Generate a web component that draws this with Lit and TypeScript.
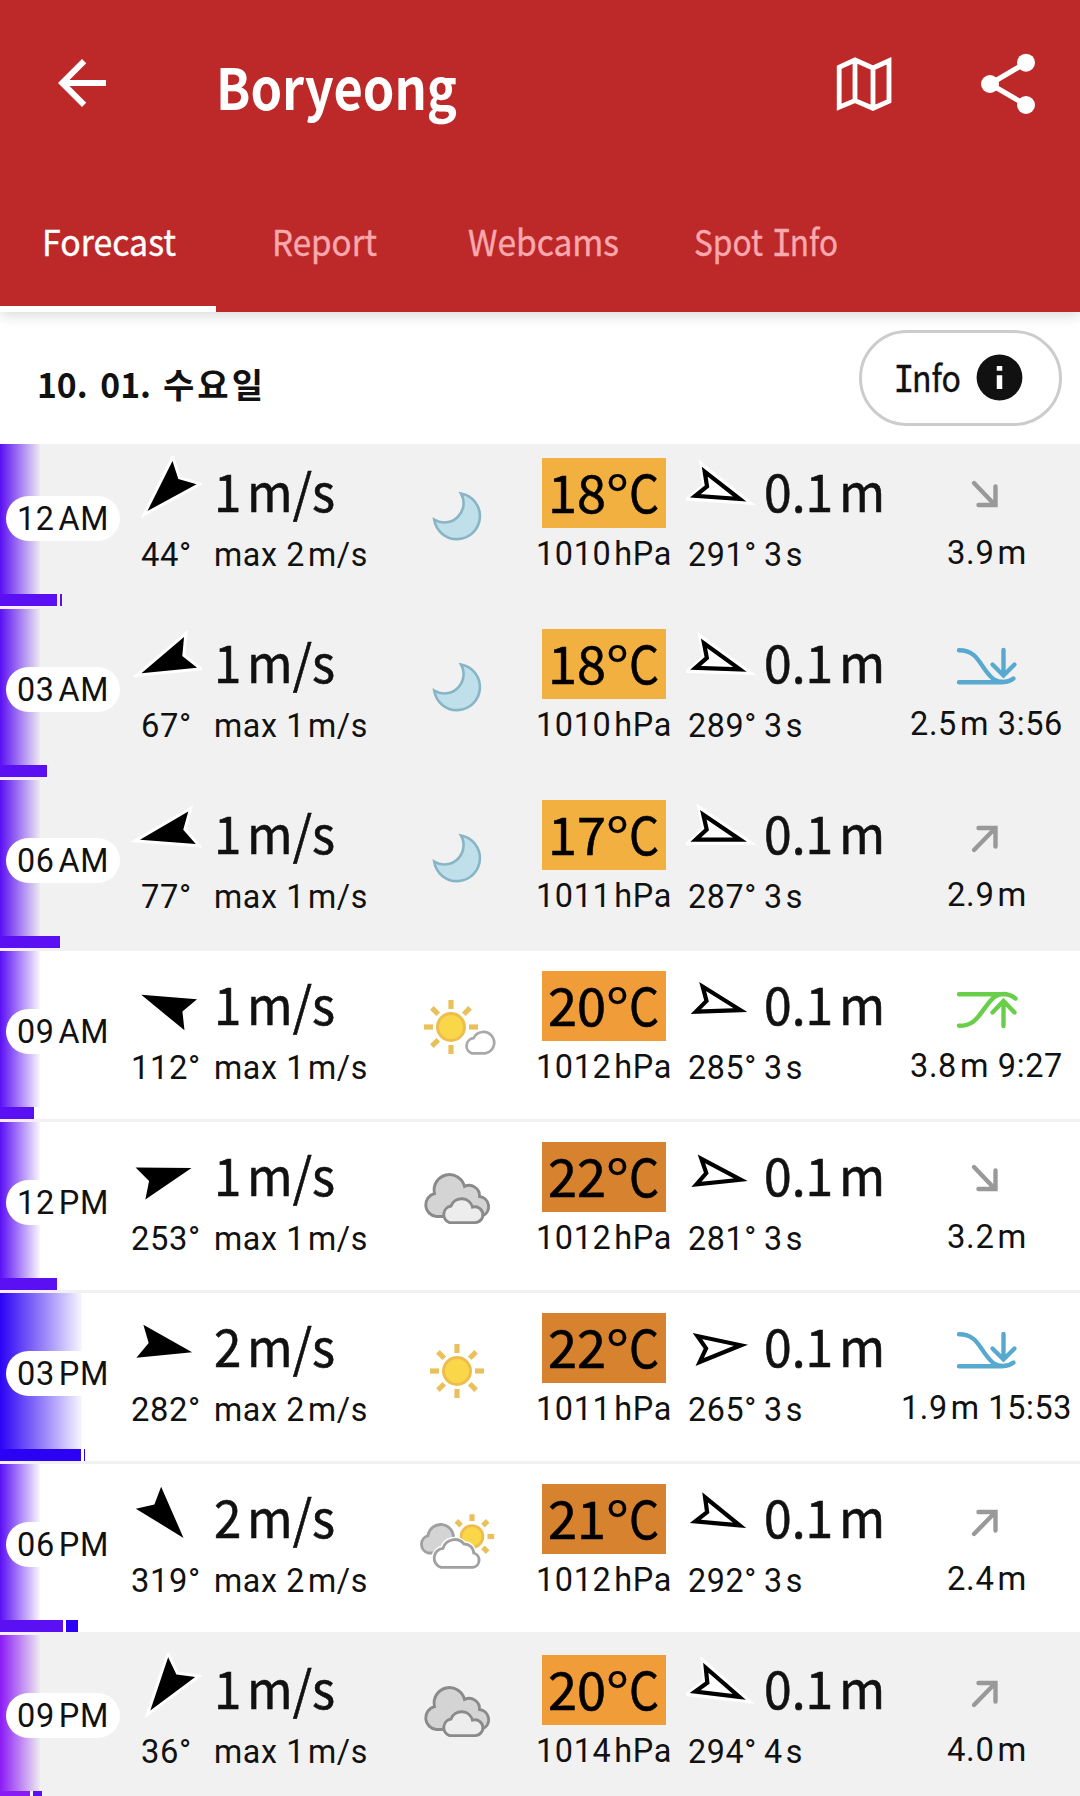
import { LitElement, html, css, svg, nothing } from "lit";
import { customElement, property } from "lit/decorators.js";
import { classMap } from "lit/directives/class-map.js";

type Sky = "moon" | "sun" | "sunCloud" | "clouds" | "sunClouds";
type Tide = "down" | "up" | "low" | "high";

interface Hour {
  time: string;
  half: string;
  wind: number;
  dir: number;
  max: number;
  sky: Sky;
  temp: number;
  tempColor: string;
  hpa: number;
  waveDir: number;
  period: number;
  tide: Tide;
  level: string;
  at?: string;
  night?: boolean;
  glow: string;
  glowWidth: number;
  bar: number;
  gust?: number;
  gustColor?: string;
}

const VIOLET = "#5b0ff3";
const BLUE = "#2c02f4";

const hours: Hour[] = [
  { time: "12", half: "AM", wind: 1, dir: 44, max: 2, sky: "moon", temp: 18, tempColor: "#f1b040", hpa: 1010, waveDir: 291, period: 3, tide: "down", level: "3.9", night: true, glow: VIOLET, glowWidth: 40, bar: 57, gust: 2, gustColor: VIOLET },
  { time: "03", half: "AM", wind: 1, dir: 67, max: 1, sky: "moon", temp: 18, tempColor: "#f1b040", hpa: 1010, waveDir: 289, period: 3, tide: "low", level: "2.5", at: "3:56", night: true, glow: VIOLET, glowWidth: 40, bar: 47 },
  { time: "06", half: "AM", wind: 1, dir: 77, max: 1, sky: "moon", temp: 17, tempColor: "#f1b040", hpa: 1011, waveDir: 287, period: 3, tide: "up", level: "2.9", night: true, glow: VIOLET, glowWidth: 40, bar: 60 },
  { time: "09", half: "AM", wind: 1, dir: 112, max: 1, sky: "sunCloud", temp: 20, tempColor: "#f09c38", hpa: 1012, waveDir: 285, period: 3, tide: "high", level: "3.8", at: "9:27", glow: VIOLET, glowWidth: 40, bar: 34 },
  { time: "12", half: "PM", wind: 1, dir: 253, max: 1, sky: "clouds", temp: 22, tempColor: "#d6822f", hpa: 1012, waveDir: 281, period: 3, tide: "down", level: "3.2", glow: VIOLET, glowWidth: 40, bar: 57 },
  { time: "03", half: "PM", wind: 2, dir: 282, max: 2, sky: "sun", temp: 22, tempColor: "#d6822f", hpa: 1011, waveDir: 265, period: 3, tide: "low", level: "1.9", at: "15:53", glow: BLUE, glowWidth: 82, bar: 81, gust: 1, gustColor: BLUE },
  { time: "06", half: "PM", wind: 2, dir: 319, max: 2, sky: "sunClouds", temp: 21, tempColor: "#d6822f", hpa: 1012, waveDir: 292, period: 3, tide: "up", level: "2.4", glow: VIOLET, glowWidth: 40, bar: 63, gust: 12, gustColor: BLUE },
  { time: "09", half: "PM", wind: 1, dir: 36, max: 1, sky: "clouds", temp: 20, tempColor: "#f09c38", hpa: 1014, waveDir: 294, period: 4, tide: "up", level: "4.0", night: true, glow: "#8a1af5", glowWidth: 40, bar: 30, gust: 9, gustColor: VIOLET },
];

/** Text squeezed or stretched horizontally to a set width. */
@customElement("fit-text")
class FitText extends LitElement {
  @property({ type: Number }) w = 0;

  static styles = css`
    :host {
      display: block;
      white-space: nowrap;
      overflow: visible;
    }
    .inner {
      display: inline-block;
      transform-origin: 0 50%;
      vertical-align: top;
    }
  `;

  protected firstUpdated() {
    const el = this.renderRoot.querySelector<HTMLElement>(".inner")!;
    this.style.width = `${this.w}px`;
    const natural = el.getBoundingClientRect().width;
    if (natural > 0) el.style.transform = `scaleX(${this.w / natural})`;
  }

  render() {
    return html`<span class="inner"><slot></slot></span>`;
  }
}

const rays = (cx: number, cy: number, from: number, to: number, angles: number[]) =>
  angles.map((a) => svg`<line x1=${cx} y1=${cy - from} x2=${cx} y2=${cy - to}
    transform="rotate(${a} ${cx} ${cy})" stroke="#eac05a" stroke-width="5.2" />`);

const ALL = [0, 45, 90, 135, 180, 225, 270, 315];

const skies: Record<Sky, unknown> = {
  moon: svg`<path d="M461 55.5A23 23 0 1 1 434.2 81.6A19.3 19.3 0 0 0 461 55.5Z" fill="#bfe0eb" stroke="#88b5c6" stroke-width="2.6" />`,
  sun: svg`${rays(457, 78, 18, 27, ALL)}
    <circle cx="457" cy="78" r="13.5" fill="#f9d748" stroke="#edbd4e" stroke-width="3" />`,
  sunCloud: svg`${rays(451, 76, 18, 27, ALL.filter((a) => a !== 135))}
    <circle cx="451" cy="76" r="13.5" fill="#f9d748" stroke="#edbd4e" stroke-width="3" />
    <path d="M472 102.4A7.8 7.8 0 0 1 473.6 87.2A10.8 10.8 0 1 1 485 102.4Z" fill="#fff" stroke="#a9a9a9" stroke-width="2.7" />`,
  clouds: svg`<path d="M436.5 94.5A11.7 11.7 0 0 1 434.5 71.5A15.4 15.4 0 0 1 464.500 64.5A10.4 10.4 0 0 1 479.500 74.500A10.2 10.2 0 0 1 482.500 94Z" fill="#d4d4d4" stroke="#8a8a8a" stroke-width="2.9" />
    <path d="M449.5 100.6A8.6 8.6 0 0 1 451 84A11.3 11.3 0 0 1 472.5 85.2A7.9 7.9 0 1 1 475 100.6Z" fill="#ededed" stroke="#8a8a8a" stroke-width="2.9" />`,
  sunClouds: svg`<path d="M428 89A9 9 0 0 1 428 71.700A12.8 12.8 0 0 1 453.500 73.500V89Z" fill="#d4d4d4" stroke="#a0a0a0" stroke-width="2.8" />
    ${rays(472, 72.500, 15.500, 22.200, [315, 0, 45, 90, 135])}
    <circle cx="472" cy="72.500" r="10.900" fill="#f9d748" stroke="#edbd4e" stroke-width="2.800" />
    <path d="M441 103.4A9.8 9.8 0 0 1 443 84.300A12.1 12.1 0 0 1 464 80A9.3 9.3 0 0 1 473.7 89A7.4 7.4 0 0 1 473 103.4Z" fill="#fff" stroke="#fff" stroke-width="5.500" />
    <path d="M441 103.4A9.8 9.8 0 0 1 443 84.300A12.1 12.1 0 0 1 464 80A9.3 9.3 0 0 1 473.7 89A7.4 7.4 0 0 1 473 103.4Z" fill="#fff" stroke="#a0a0a0" stroke-width="2.8" />`,
};

const tides: Record<Tide, unknown> = {
  down: svg`<path class="trend" d="M974 45L995 67M995.5 48.5V67H978.5" />`,
  up: svg`<path class="trend" d="M974 70L995 48.5M978.5 48H995.5V66.5" />`,
  low: svg`<path class="low" d="M959 41.2C975 41 979 53 986 62C992 70 996 73 1003 73Q1009 73 1013.500 69.500M959 73.200H1003M1003.500 41V66M992.500 55.500L1003.500 66.500L1014.500 55.500" />`,
  high: svg`<path class="high" d="M959 74.800C975 75 979 64 986 55.500C992 47 996 43.500 1003 43Q1010 43 1015.500 47.500M959 43.200H1003M1003.500 75V50M992.500 61.500L1003.500 50L1014.500 61.500" />`,
};

const DART = "M0-26.700L16.750 26.700L0 17.700L-16.750 26.700Z";

@customElement("hour-row")
class HourRow extends LitElement {
  @property({ attribute: false }) hour!: Hour;

  static styles = css`
    :host {
      display: block;
    }
    .row {
      display: grid;
      grid-template-columns: 126px 80px 180px 142px 152px 213px 187px;
      height: 171px;
      box-sizing: border-box;
      border-bottom: 3px solid #f1f1f1;
      background: #fff;
      position: relative;
      color: #111;
      font: 33px/40px Roboto, sans-serif;
      letter-spacing: 0.02em;
    }
    .row.night {
      background: #f1f1f1;
    }
    .glow {
      position: absolute;
      left: 0;
      top: 0;
      height: 156px;
    }
    .bars {
      position: absolute;
      left: 0;
      bottom: 0;
      height: 12px;
      display: flex;
      gap: 3px;
    }
    .seam {
      position: absolute;
      left: 0;
      top: 168px;
      width: 58px;
      height: 3px;
      background: linear-gradient(90deg, #f8ecfb, #f1f1f1);
    }
    .time {
      position: relative;
      padding: 58px 0 0 6px;
    }
    .pill {
      width: 114px;
      height: 45px;
      border-radius: 23px;
      background: #fff;
      box-sizing: border-box;
      padding: 3px 0 0 11px;
    }
    .half {
      margin-left: 4px;
    }
    .u {
      margin-left: 3px;
    }
    .col {
      display: flex;
      flex-direction: column;
      min-width: 0;
    }
    .mid {
      align-items: center;
    }
    .big {
      font: 52px/60px "Noto Sans CJK KR", sans-serif;
      letter-spacing: 0;
      -webkit-text-stroke: 0.6px currentColor;
    }
    .big .u {
      margin-left: 6px;
    }
    .arrow {
      padding-top: 18px;
      gap: 7px;
    }
    .arrow svg,
    .waves svg {
      width: 72px;
      height: 72px;
      display: block;
      overflow: hidden;
    }
    .wind {
      padding: 22px 0 0 8px;
      gap: 15px;
    }
    .sky {
      padding-top: 40px;
    }
    .sky svg {
      width: 84px;
      height: 72px;
      display: block;
    }
    .air {
      padding-top: 20px;
      gap: 6px;
    }
    .temp {
      display: flex;
      width: 124px;
      height: 70px;
      line-height: 65px;
      box-sizing: border-box;
      padding-left: 6px;
      color: #000;
    }
    .deg {
      font-size: 60px;
      line-height: 72px;
      -webkit-text-stroke: 0.2px currentColor;
    }
    .waves {
      padding: 18px 0 0 6px;
      gap: 7px;
    }
    .waveline {
      display: flex;
      height: 72px;
    }
    .waveline .big {
      padding: 4px 0 0 6px;
    }
    .period {
      display: flex;
      gap: 7px;
      padding-left: 2px;
    }
    .tide {
      padding-top: 30px;
      gap: 9px;
    }
    .tide svg {
      width: 76px;
      height: 56px;
      display: block;
    }
    .trend,
    .low,
    .high {
      fill: none;
      stroke-width: 4.4px;
      stroke-linecap: round;
      stroke: #999;
    }
    .low {
      stroke: #58a9cf;
    }
    .high {
      stroke: #69cf4b;
    }
  `;

  render() {
    const h = this.hour;
    return html`
      <div class=${classMap({ row: true, night: !!h.night })}>
        <div class="glow" style="width:${h.glowWidth}px;background:linear-gradient(90deg, ${h.glow}, ${h.glow}90 45%, ${h.glow}08)"></div>
        <div class="bars">
          <div style="width:${h.bar}px;background:${h.glow}"></div>
          ${h.gust ? html`<div style="width:${h.gust}px;background:${h.gustColor}"></div>` : nothing}
        </div>
        <div class="seam"></div>
        <div class="time">
          <div class="pill"><fit-text w="92">${h.time}<span class="half">${h.half}</span></fit-text></div>
        </div>
        <div class="col mid arrow">
          <svg viewBox="-36 -35.800 72 72">
            <g transform="rotate(${h.dir + 180})">
              <path d=${DART} stroke="#fff" stroke-width="6" stroke-miterlimit="10" />
              <path d=${DART} />
            </g>
          </svg>
          <fit-text w=${h.dir > 99 ? 70 : 51}>${h.dir}°</fit-text>
        </div>
        <div class="col wind">
          <fit-text class="big" w="121">${h.wind}<span class="u">m/s</span></fit-text>
          <fit-text w="154">max ${h.max}<span class="u">m/s</span></fit-text>
        </div>
        <div class="col mid sky"><svg viewBox="415 40 84 72">${skies[h.sky]}</svg></div>
        <div class="col mid air">
          <div class="temp big" style="background:${h.tempColor}"><fit-text w="58">${h.temp}</fit-text><fit-text class="deg" w="23">°</fit-text><fit-text w="30">C</fit-text></div>
          <fit-text w="136">${h.hpa}<span class="u">hPa</span></fit-text>
        </div>
        <div class="col waves">
          <div class="waveline">
            <svg viewBox="-35.500 -36 72 72">
              <g transform="rotate(${h.waveDir + 180})">
                <path d=${DART} fill="#fff" stroke="#fff" stroke-width="6" stroke-miterlimit="10" />
                <path d="M0-19.500L13 23L0 15.500L-13 23Z" fill="#fff" stroke="#000" stroke-width="4.200" stroke-miterlimit="10" />
              </g>
            </svg>
            <fit-text class="big" w="121">0.1<span class="u">m</span></fit-text>
          </div>
          <div class="period">
            <fit-text w="69">${h.waveDir}°</fit-text>
            <fit-text w="39">${h.period}<span class="u">s</span></fit-text>
          </div>
        </div>
        <div class="col mid tide">
          <svg viewBox="949 30 76 56">${tides[h.tide]}</svg>
          <fit-text w=${h.at ? (h.at.length > 4 ? 171 : 153) : 80}>${h.level}<span class="u">m</span>${h.at ? ` ${h.at}` : nothing}</fit-text>
        </div>
      </div>
    `;
  }
}

@customElement("app-root")
class AppRoot extends LitElement {
  static styles = css`
    :host {
      display: block;
      width: 1080px;
      height: 1796px;
      overflow: hidden;
      background: #fff;
      font-family: "Noto Sans CJK KR", sans-serif;
      color: #111;
    }
    .head {
      position: relative;
      z-index: 3;
      height: 312px;
      background: #bd2829;
      color: #fff;
      box-shadow: 0 2px 14px rgba(0, 0, 0, 0.18);
      display: flex;
      flex-direction: column;
    }
    .bar {
      height: 180px;
      display: flex;
      box-sizing: border-box;
      padding: 47px 0 0 46px;
    }
    .icon {
      width: 72px;
      height: 72px;
      flex: none;
      display: block;
    }
    .title {
      font: 700 57px/72px "Noto Sans CJK KR", sans-serif;
      margin: 2px 0 0 98px;
      flex: 1;
    }
    .map {
      margin-right: 72px;
    }
    .share {
      margin-right: 36px;
    }
    .tabs {
      flex: 1;
      display: flex;
    }
    .tab {
      display: flex;
      flex-direction: column;
      align-items: center;
      box-sizing: border-box;
      padding: 33px 0 0;
      font-size: 36px;
      line-height: 54px;
      color: #f9a8ae;
      -webkit-text-stroke: 0.4px currentColor;
    }
    .tab:nth-child(1) {
      width: 216px;
      padding-left: 2px;
      color: #fff;
      border-bottom: 6px solid #fff;
    }
    .tab:nth-child(2) {
      width: 216px;
    }
    .tab:nth-child(3) {
      width: 223px;
    }
    .tab:nth-child(4) {
      width: 221px;
    }
    .pair {
      display: flex;
      gap: 11px;
    }
    .day {
      position: relative;
      z-index: 2;
      height: 132px;
      box-sizing: border-box;
      background: #fff;
      display: flex;
      justify-content: space-between;
      padding: 18px 18px 0 37px;
    }
    .date {
      display: flex;
      gap: 12px;
      font-weight: 700;
      font-size: 34px;
      line-height: 54px;
      padding-top: 27px;
      word-spacing: 5px;
    }
    .hangul {
      letter-spacing: 3px;
    }
    .info {
      width: 203px;
      height: 96px;
      box-sizing: border-box;
      border: 3px solid #ccc;
      border-radius: 48px;
      display: flex;
      padding: 16px 0 0 34px;
      gap: 11px;
      font-size: 36px;
      line-height: 54px;
      -webkit-text-stroke: 0.4px currentColor;
    }
    .info svg {
      width: 55px;
      height: 55px;
      margin-top: 1px;
    }
    .slab {
      font-family: "Liberation Mono", monospace;
      font-size: 40px;
      line-height: 0;
      letter-spacing: -3px;
      margin-left: -3px;
    }
    .list {
      margin-top: -6px;
    }
  `;

  render() {
    const slab = html`<span class="slab">I</span>`;
    return html`
      <div class="head">
        <div class="bar">
          <svg class="icon" viewBox="0 0 24 24" fill="#fff">
            <path d="M20 11H7.830l5.590-5.590L12 4l-8 8 8 8 1.410-1.410L7.830 13H20v-2z" />
          </svg>
          <div class="title"><fit-text w="241">Boryeong</fit-text></div>
          <svg class="icon map" viewBox="828 47 72 72" fill="none" stroke="#fff" stroke-width="4.800">
            <path d="M839.200 67.300L855 60L873 68L889 60.700V101.300L873 108.300L855 100.500L839.200 107.200ZM855 60V101M873 68V108" />
          </svg>
          <svg class="icon share" viewBox="972 47 72 72" fill="#fff" stroke="#fff" stroke-width="5.200">
            <path fill="none" d="M1026 62.700L990 84L1026 105" />
            <g stroke="none"><circle cx="990" cy="84" r="9" /><circle cx="1026" cy="62.700" r="9" /><circle cx="1026" cy="105" r="9" /></g>
          </svg>
        </div>
        <div class="tabs">
          <div class="tab"><fit-text w="134">Forecast</fit-text></div>
          <div class="tab"><fit-text w="105">Report</fit-text></div>
          <div class="tab"><fit-text w="151">Webcams</fit-text></div>
          <div class="tab">
            <div class="pair"><fit-text w="69">Spot</fit-text><fit-text w="64">${slab}nfo</fit-text></div>
          </div>
        </div>
      </div>
      <div class="day">
        <div class="date"><fit-text w="114">10. 01.</fit-text><fit-text class="hangul" w="103">수요일</fit-text></div>
        <div class="info">
          <fit-text w="65">${slab}nfo</fit-text>
          <svg viewBox="0 0 24 24" fill="#111">
            <path fill-rule="evenodd" d="M12 2a10 10 0 1 0 0 20 10 10 0 0 0 0-20zm1.200 15h-2.400v-6h2.400v6zm0-8h-2.400V7h2.400v2z" />
          </svg>
        </div>
      </div>
      <div class="list">${hours.map((h) => html`<hour-row .hour=${h}></hour-row>`)}</div>
    `;
  }
}
